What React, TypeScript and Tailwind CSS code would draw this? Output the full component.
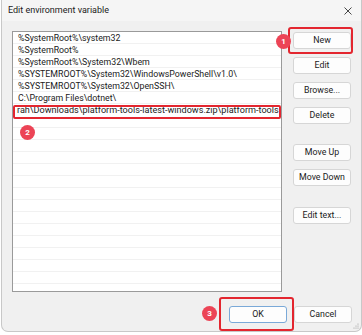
const paths = [
  '%SystemRoot%\\system32',
  '%SystemRoot%',
  '%SystemRoot%\\System32\\Wbem',
  '%SYSTEMROOT%\\System32\\WindowsPowerShell\\v1.0\\',
  '%SYSTEMROOT%\\System32\\OpenSSH\\',
  'C:\\Program Files\\dotnet\\',
];
const editing = 'rah\\Downloads\\platform-tools-latest-windows.zip\\platform-tools';

function Btn({ label, primary = false }: { label: string; primary?: boolean }) {
  return (
    <div
      className={
        'w-[58px] h-[17px] flex items-center justify-center rounded-[3px] border bg-[#fdfdfd] text-[8.8px] text-[#1b1b1b] ' +
        (primary ? 'border-[#7aa9d8]' : 'border-[#d6d6d6]')
      }
    >
      {label}
    </div>
  );
}

function Badge({ n, className }: { n: number; className: string }) {
  return (
    <div
      className={
        'absolute w-[15px] h-[15px] rounded-full bg-[#ec4456] text-white text-[8px] font-bold flex items-center justify-center ' +
        className
      }
    >
      {n}
    </div>
  );
}

export default function App() {
  const empty = Array.from({ length: 15 });
  return (
    <div className="relative w-[362px] h-[335px] bg-white overflow-hidden font-['Roboto',sans-serif]">
      <div className="ml-[1px] w-[361px] h-[332px] border border-t-0 border-[#c8c8c8] rounded-b-[7px] bg-[#f0f0f0] flex flex-col">
        {/* title bar */}
        <div className="h-[22px] flex items-center justify-between pl-[6px] pr-[9px] bg-[#f5f5f5]">
          <span className="text-[9px] text-[#1b1b1b]">Edit environment variable</span>
          <svg width="8" height="8" viewBox="0 0 8 8">
            <path d="M0.5 0.5L7.5 7.5M7.5 0.5L0.5 7.5" stroke="#333" strokeWidth="0.9" />
          </svg>
        </div>

        {/* body */}
        <div className="flex pt-[10px] pl-[10px] gap-[11px]">
          <div className="w-[270px] h-[261px] border border-[#9a9a9a] bg-white overflow-hidden">
            {paths.map((p) => (
              <div
                key={p}
                className="h-[12px] leading-[12px] pl-[5px] border-b border-[#f1f1f1] text-[8.8px] text-[#1b1b1b] whitespace-nowrap overflow-hidden"
              >
                {p}
              </div>
            ))}
            <div className="h-[12px] leading-[13px] pl-[4px] text-[9.1px] text-[#1b1b1b] whitespace-nowrap overflow-hidden">
              {editing}
            </div>
            {empty.map((_, i) => (
              <div key={i} className="h-[12px] border-b border-[#f1f1f1]" />
            ))}
          </div>

          <div className="flex flex-col pt-[1px]">
            <div className="flex flex-col gap-[8px]">
              <Btn label="New" />
              <Btn label="Edit" />
              <Btn label="Browse..." />
              <Btn label="Delete" />
            </div>
            <div className="flex flex-col gap-[8px] mt-[20px]">
              <Btn label="Move Up" />
              <Btn label="Move Down" />
            </div>
            <div className="mt-[21px]">
              <Btn label="Edit text..." />
            </div>
          </div>
        </div>

        {/* footer */}
        <div className="flex justify-end gap-[7px] pr-[9px] mt-[14px]">
          <Btn label="OK" primary />
          <Btn label="Cancel" />
        </div>

        <div className="flex-1 flex items-end justify-end pr-[2px] pb-[2px]">
          <svg width="6" height="6" viewBox="0 0 6 6">
            <circle cx="5" cy="1" r="0.6" fill="#9a9a9a" />
            <circle cx="3" cy="3" r="0.6" fill="#9a9a9a" />
            <circle cx="5" cy="3" r="0.6" fill="#9a9a9a" />
            <circle cx="1" cy="5" r="0.6" fill="#9a9a9a" />
            <circle cx="3" cy="5" r="0.6" fill="#9a9a9a" />
            <circle cx="5" cy="5" r="0.6" fill="#9a9a9a" />
          </svg>
        </div>
      </div>

      {/* annotations */}
      <div className="absolute left-[288px] top-[27px] w-[65px] h-[27px] border-[2.5px] border-[#e3262f] rounded-[3px]" />
      <div className="absolute left-[13px] top-[105px] w-[268px] h-[14px] border-[2px] border-[#e3262f] rounded-[2px]" />
      <div className="absolute left-[219px] top-[297px] w-[75px] h-[34px] border-[2.5px] border-[#e3262f] rounded-[3px]" />
      <Badge n={1} className="left-[276px] top-[34px]" />
      <Badge n={2} className="left-[20px] top-[125px]" />
      <Badge n={3} className="left-[202px] top-[306px]" />
    </div>
  );
}
